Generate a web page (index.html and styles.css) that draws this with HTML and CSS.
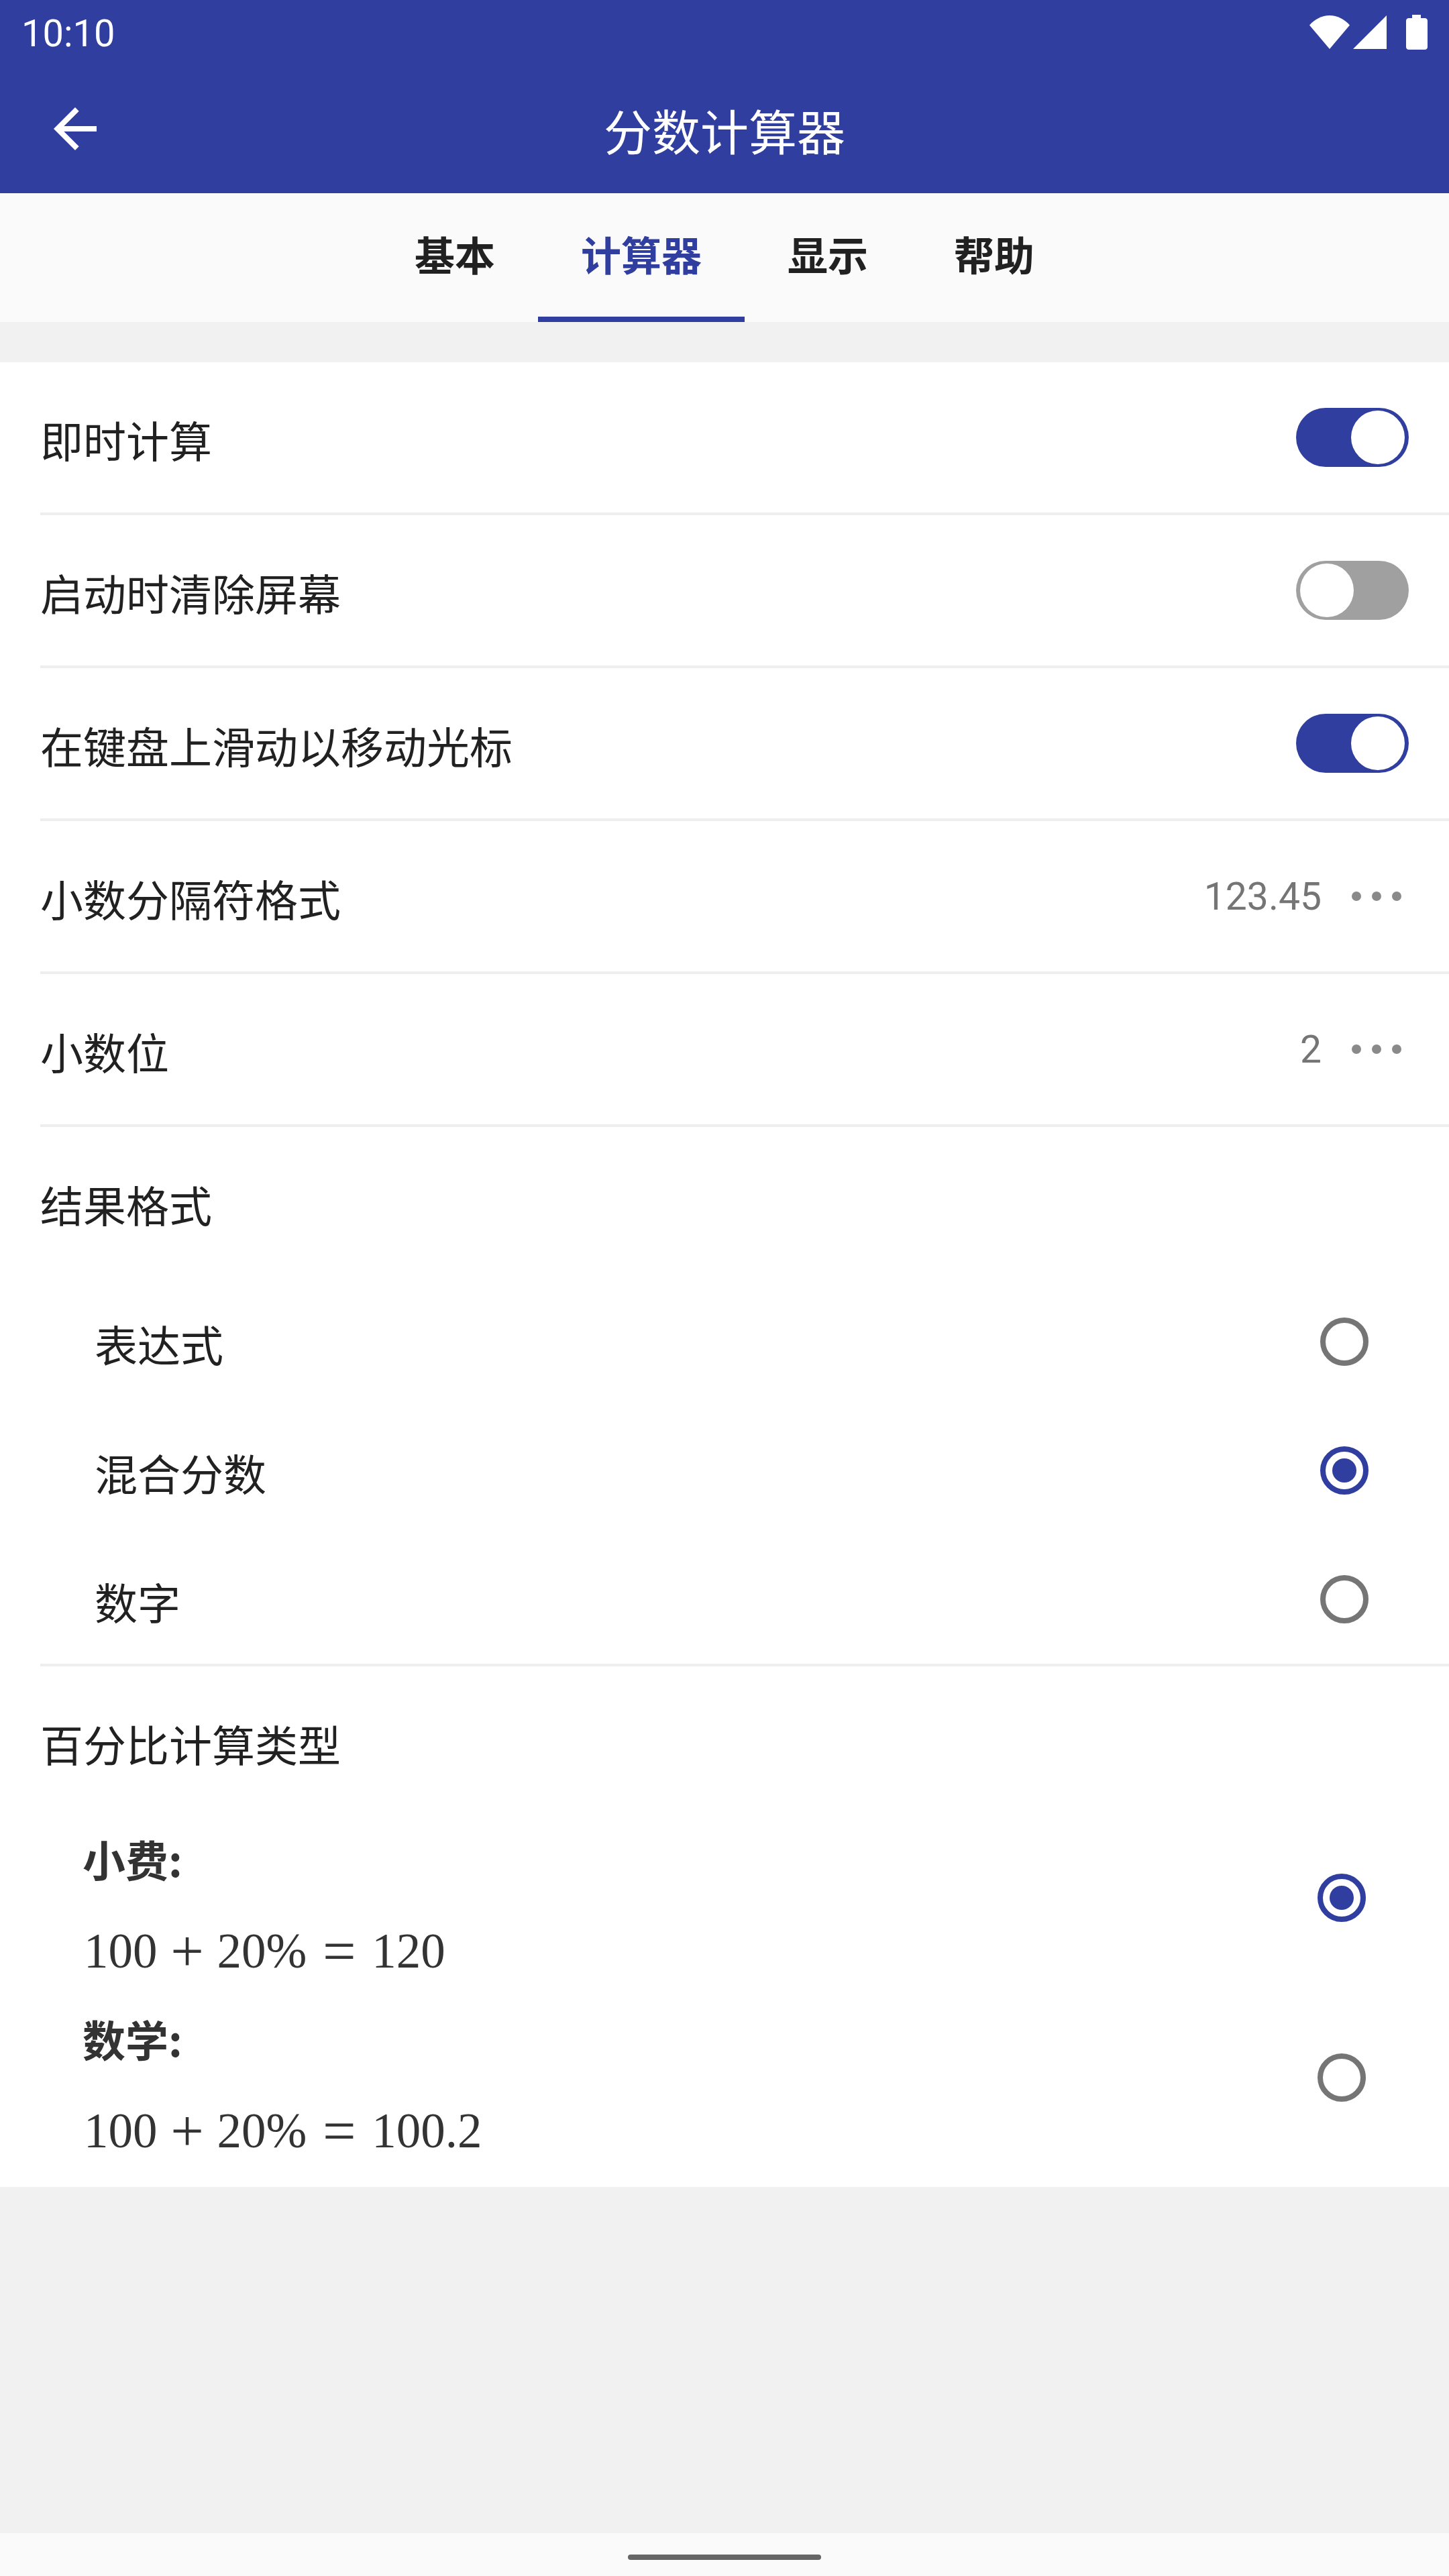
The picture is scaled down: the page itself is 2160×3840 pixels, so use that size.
FILE: index.html
```html
<!DOCTYPE html>
<html lang="zh">
<head>
    <meta charset="UTF-8">
    <meta name="viewport" content="width=device-width, initial-scale=1.0">
    <title>分数计算器</title>
    <link rel="stylesheet" href="styles.css">
</head>
<body>
    <div class="status-bar">
        <span class="status-time">10:10</span>
        <div class="status-icons">
            <svg class="icon-wifi" width="60" height="50" viewBox="0 0 60 50"><path d="M0 14.5C8 5.500 18.500 0 30 0s22 5.500 30 14.500L30 50z" fill="#fff"/></svg>
            <svg class="icon-signal" width="50" height="50" viewBox="0 0 50 50"><path d="M50 0v50H0z" fill="#fff"/></svg>
            <svg class="icon-battery" width="32" height="52" viewBox="0 0 32 52"><path d="M9 0h13v5h6c2 0 4 1.500 4 4v39c0 2.500-2 4-4 4H4c-2 0-4-1.500-4-4V9c0-2.500 2-4 4-4h5z" fill="#fff"/></svg>
        </div>
    </div>
    <div class="app-bar">
        <svg class="back-icon" width="96" height="96" viewBox="0 0 24 24"><path d="M20 11H7.830l5.590-5.590L12 4l-8 8 8 8 1.410-1.410L7.830 13H20v-2z" fill="#fff"/></svg>
        <h1 class="app-title">分数计算器</h1>
    </div>
    <div class="tabs">
        <div class="tab">基本</div>
        <div class="tab tab-active">计算器</div>
        <div class="tab">显示</div>
        <div class="tab">帮助</div>
    </div>

    <div class="content">
        <div class="settings">
            <div class="row">
                <span class="label">即时计算</span>
                <div class="toggle toggle-on"><div class="thumb"></div></div>
            </div>
            <div class="row">
                <span class="label">启动时清除屏幕</span>
                <div class="toggle"><div class="thumb"></div></div>
            </div>
            <div class="row">
                <span class="label">在键盘上滑动以移动光标</span>
                <div class="toggle toggle-on"><div class="thumb"></div></div>
            </div>
            <div class="row">
                <span class="label">小数分隔符格式</span>
                <div class="value-box">
                    <span class="value">123.45</span>
                    <div class="dots"><i></i><i></i><i></i></div>
                </div>
            </div>
            <div class="row">
                <span class="label">小数位</span>
                <div class="value-box">
                    <span class="value">2</span>
                    <div class="dots"><i></i><i></i><i></i></div>
                </div>
            </div>

            <div class="group">
                <div class="group-title"><span class="label">结果格式</span></div>
                <div class="option">
                    <span class="label">表达式</span>
                    <div class="radio"></div>
                </div>
                <div class="option">
                    <span class="label">混合分数</span>
                    <div class="radio radio-on"></div>
                </div>
                <div class="option">
                    <span class="label">数字</span>
                    <div class="radio"></div>
                </div>
            </div>

            <div class="group group-last">
                <div class="group-title group-title-percent"><span class="label">百分比计算类型</span></div>
                <div class="percent-item">
                    <div class="percent-text">
                        <div class="percent-name">小费:</div>
                        <div class="math"><span>100</span><span class="op">+</span><span>20%</span><span class="rel">=</span><span>120</span></div>
                    </div>
                    <div class="radio radio-on"></div>
                </div>
                <div class="percent-item">
                    <div class="percent-text">
                        <div class="percent-name">数学:</div>
                        <div class="math"><span>100</span><span class="op">+</span><span>20%</span><span class="rel">=</span><span>100.2</span></div>
                    </div>
                    <div class="radio"></div>
                </div>
            </div>
        </div>
    </div>

    <div class="nav-bar"><div class="nav-handle"></div></div>
</body>
</html>
```

FILE: styles.css
```css
body {
    font-family: "Noto Sans CJK SC", "Noto Sans", sans-serif;
    background-color: #f1f1f1;
    margin: 0;
    display: flex;
    flex-direction: column;
    height: 3840px;
    overflow: hidden;
}
.status-bar {
    height: 96px;
    background-color: #303f9f;
    display: flex;
    justify-content: space-between;
    padding: 22px 32px 0;
    box-sizing: border-box;
    color: white;
    flex-shrink: 0;
}
.status-time {
    font-family: Roboto, sans-serif;
    font-size: 56px;
    line-height: 56px;
}
.status-icons {
    display: flex;
    align-items: flex-start;
    margin-top: 1px;
}
.icon-signal {
    margin-left: 5px;
}
.icon-battery {
    margin-left: 29px;
    margin-top: -1px;
}
.app-bar {
    height: 192px;
    background-color: #303f9f;
    display: flex;
    align-items: center;
    justify-content: center;
    position: relative;
    flex-shrink: 0;
}
.back-icon {
    position: absolute;
    left: 64px;
    top: 48px;
}
.app-title {
    margin: 0;
    font-size: 72px;
    font-weight: 400;
    color: white;
}
.tabs {
    height: 192px;
    background-color: #fafafa;
    display: flex;
    justify-content: center;
    flex-shrink: 0;
}
.tab {
    padding: 0 64px 14px;
    font-size: 60px;
    font-weight: 700;
    color: #212121;
    display: flex;
    align-items: center;
    box-sizing: border-box;
}
.tab-active {
    color: #303f9f;
    border-bottom: 8px solid #303f9f;
    padding-top: 8px;
}
.content {
    flex: 1;
    padding-top: 60px;
}
.settings {
    background: white;
    height: 2720px;
}
.label {
    display: block;
    padding-top: 4px;
    font-size: 64px;
    line-height: 80px;
    color: #212121;
}
.row {
    height: 228px;
    margin-left: 60px;
    padding-right: 60px;
    box-sizing: border-box;
    border-bottom: 4px solid #eeeeee;
    display: flex;
    align-items: center;
    justify-content: space-between;
}
.toggle {
    width: 168px;
    height: 88px;
    border-radius: 44px;
    background-color: #a0a0a0;
    display: flex;
    align-items: center;
    padding: 0 6px;
    box-sizing: border-box;
}
.toggle-on {
    background-color: #303f9f;
    justify-content: flex-end;
}
.thumb {
    width: 80px;
    height: 80px;
    border-radius: 50%;
    background: white;
}
.value-box {
    display: flex;
    align-items: center;
}
.value {
    font-family: Roboto, sans-serif;
    font-size: 57px;
    color: #757575;
}
.dots {
    display: flex;
    gap: 16px;
    margin-left: 45px;
    margin-right: 11px;
}
.dots i {
    display: block;
    width: 14px;
    height: 14px;
    border-radius: 50%;
    background-color: #8a8a8a;
}
.group {
    margin-left: 60px;
    border-bottom: 4px solid #eeeeee;
}
.group-last {
    margin-left: 0;
    border-bottom: none;
}
.group-title {
    height: 224px;
    display: flex;
    align-items: center;
}
.group-title-percent {
    height: 211px;
    padding: 12px 0 0 60px;
    box-sizing: border-box;
}
.option {
    height: 192px;
    padding: 0 120px 0 81px;
    display: flex;
    align-items: center;
    justify-content: space-between;
}
.radio {
    width: 72px;
    height: 72px;
    border: 8px solid #757575;
    border-radius: 50%;
    box-sizing: border-box;
    display: flex;
    align-items: center;
    justify-content: center;
}
.radio-on {
    border-color: #303f9f;
}
.radio-on::after {
    content: "";
    width: 36px;
    height: 36px;
    border-radius: 50%;
    background-color: #303f9f;
}
.percent-item {
    height: 268px;
    padding: 0 124px 0 125px;
    display: flex;
    align-items: center;
    justify-content: space-between;
}
.percent-text {
    padding-top: 14px;
}
.percent-name {
    margin-left: -2px;
    font-size: 64px;
    font-weight: 700;
    line-height: 146px;
    color: #333333;
}
.math {
    font-family: "Liberation Serif", serif;
    font-size: 73px;
    line-height: 132px;
    color: #333333;
    display: flex;
}
.op {
    width: 57px;
    margin: 0 16px;
    text-align: center;
    font-size: 88px;
}
.rel {
    width: 57px;
    margin: 0 20px;
    text-align: center;
    font-size: 88px;
}
.nav-bar {
    height: 64px;
    background-color: #fafafa;
    display: flex;
    justify-content: center;
    padding-top: 32px;
    box-sizing: border-box;
    flex-shrink: 0;
}
.nav-handle {
    width: 288px;
    height: 8px;
    border-radius: 4px;
    background-color: #666666;
}
```
